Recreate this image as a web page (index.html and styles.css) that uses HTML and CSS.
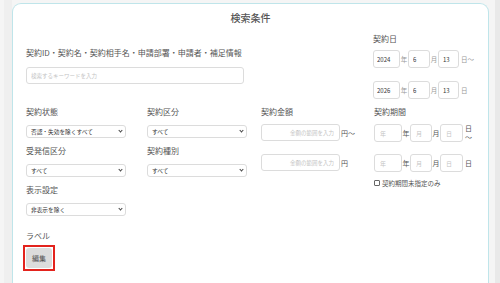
FILE: index.html
```html
<!DOCTYPE html>
<html lang="ja">
<head>
    <meta charset="UTF-8">
    <title>検索条件</title>
    <link rel="stylesheet" href="styles.css">
</head>
<body>
<div class="gutter-left"></div>
<div class="panel">
    <h2 class="title">検索条件</h2>

    <!--キーワードと契約日-->
    <div class="row-top">
        <div class="keyword">
            <label class="label" for="keyword">契約ID・契約名・契約相手名・申請部署・申請者・補足情報</label>
            <input class="text-input keyword-input" id="keyword" type="text" placeholder="検索するキーワードを入力">
        </div>
        <div class="date-col">
            <span class="label">契約日</span>
            <div class="date-row">
                <input class="date-input year" type="text" value="2024"><span class="unit light">年</span>
                <input class="date-input month" type="text" value="6"><span class="unit light">月</span>
                <input class="date-input day" type="text" value="13"><span class="unit light tail">日〜</span>
            </div>
            <div class="date-row second">
                <input class="date-input year" type="text" value="2026"><span class="unit light">年</span>
                <input class="date-input month" type="text" value="6"><span class="unit light">月</span>
                <input class="date-input day" type="text" value="13"><span class="unit light tail">日</span>
            </div>
        </div>
    </div>

    <!--プルダウン・金額・期間-->
    <div class="row-main">
        <div class="selects">
            <div class="field">
                <span class="label">契約状態</span>
                <span class="select-wrap">
                    <select class="select">
                        <option>否認・失効を除くすべて</option>
                    </select>
                </span>
            </div>
            <div class="field">
                <span class="label">契約区分</span>
                <span class="select-wrap">
                    <select class="select">
                        <option>すべて</option>
                    </select>
                </span>
            </div>
            <div class="field">
                <span class="label">受発信区分</span>
                <span class="select-wrap">
                    <select class="select">
                        <option>すべて</option>
                    </select>
                </span>
            </div>
            <div class="field">
                <span class="label">契約種別</span>
                <span class="select-wrap">
                    <select class="select">
                        <option>すべて</option>
                    </select>
                </span>
            </div>
            <div class="field">
                <span class="label">表示設定</span>
                <span class="select-wrap">
                    <select class="select">
                        <option>非表示を除く</option>
                    </select>
                </span>
            </div>
        </div>

        <div class="amount">
            <span class="label">契約金額</span>
            <div class="amount-row">
                <input class="text-input amount-input" type="text" placeholder="金額の範囲を入力"><span class="unit dark">円〜</span>
            </div>
            <div class="amount-row second">
                <input class="text-input amount-input" type="text" placeholder="金額の範囲を入力"><span class="unit dark">円</span>
            </div>
        </div>

        <div class="period">
            <span class="label">契約期間</span>
            <div class="date-row">
                <input class="date-input p-year" type="text" placeholder="年"><span class="unit dark">年</span>
                <input class="date-input p-month" type="text" placeholder="月"><span class="unit dark">月</span>
                <input class="date-input p-day" type="text" placeholder="日"><span class="unit dark tail stack">日<br>〜</span>
            </div>
            <div class="date-row p-second">
                <input class="date-input p-year" type="text" placeholder="年"><span class="unit dark">年</span>
                <input class="date-input p-month" type="text" placeholder="月"><span class="unit dark">月</span>
                <input class="date-input p-day" type="text" placeholder="日"><span class="unit dark tail">日</span>
            </div>
            <label class="check">
                <span class="check-box"></span>契約期間未指定のみ
            </label>
        </div>
    </div>

    <!--ラベル-->
    <div class="label-block">
        <span class="label">ラベル</span>
        <!--赤枠で囲まれた編集ボタン-->
        <span class="edit-frame">
            <button class="edit-button" type="button">編集</button>
        </span>
    </div>

    <div class="next-label">ソート条件</div>
</div>
<div class="gutter-right"></div>
</body>
</html>
```

FILE: styles.css
```css
* {
    margin: 0;
    padding: 0;
    box-sizing: border-box;
}

body {
    display: flex;
    align-items: flex-start;
    height: 283px;
    overflow: hidden;
    background: #f5f5f5;
    font-family: "Noto Sans CJK JP", "Noto Sans", sans-serif;
    color: #555;
}

.gutter-left {
    margin-left: 4px;
    width: 8px;
    height: 283px;
    background: #efefef;
}

.panel {
    margin-top: 3px;
    padding: 0 13px;
    width: 477px;
    height: 320px;
    background: #fff;
    border: 1px solid #bfe5ea;
    border-bottom: none;
    border-radius: 9px 9px 0 0;
}

.gutter-right {
    margin-left: 6px;
    width: 5px;
    height: 283px;
    background: #e9e9e9;
}

.title {
    margin-top: 7px;
    font-size: 10px;
    line-height: 14px;
    font-weight: 500;
    text-align: center;
    color: #555;
}

.label {
    display: block;
    font-size: 8px;
    line-height: 12px;
    color: #555;
    white-space: nowrap;
}

/* 入力欄の共通部分 */
.text-input,
.date-input,
.select {
    font: inherit;
    color: #333;
    background: #fff;
    border: 1px solid #dcdcdc;
    border-radius: 3px;
    outline: none;
}

.text-input::placeholder,
.date-input::placeholder {
    color: #c4c4c4;
}

.row-top {
    display: flex;
    margin-top: 8px;
}

.keyword {
    padding-top: 14px;
    width: 218px;
}

.keyword-input {
    display: block;
    margin-top: 8px;
    padding: 0 4px;
    width: 218px;
    height: 17px;
    font-size: 5.5px;
}

.date-col {
    margin-left: 129px;
}

.date-row {
    display: flex;
    align-items: center;
    margin-top: 5px;
    height: 18px;
}

.date-row.second {
    margin-top: 13px;
}

.date-input {
    height: 18px;
    padding-left: 4px;
    font-size: 6px;
}

.year {
    width: 27px;
    padding-left: 3px;
}

.month {
    width: 22px;
}

.day {
    width: 21px;
}

.unit {
    display: inline-block;
    width: 8px;
    text-align: center;
    font-size: 6.5px;
    line-height: 8px;
}

.unit.light {
    color: #999;
}

.unit.dark {
    color: #555;
    font-size: 7px;
}

.unit.tail {
    width: auto;
    padding-left: 2px;
}

.row-main {
    display: flex;
    margin-top: 7px;
}

.selects {
    display: grid;
    grid-template-columns: 100px 100px;
    column-gap: 21px;
    row-gap: 7px;
    width: 221px;
}

.select-wrap {
    position: relative;
    display: block;
    margin-top: 7px;
}

.select {
    display: block;
    width: 100px;
    height: 13px;
    padding-left: 4px;
    font-size: 5.7px;
    -webkit-appearance: none;
    appearance: none;
}

/*プルダウンの矢印*/
.select-wrap::after {
    content: "";
    position: absolute;
    right: 4px;
    top: 4px;
    width: 2px;
    height: 2px;
    border-right: 1px solid #444;
    border-bottom: 1px solid #444;
    transform: rotate(45deg);
}

.amount {
    margin-left: 14px;
    width: 98px;
}

.amount-row {
    display: flex;
    align-items: center;
    margin-top: 6px;
}

.amount-row.second {
    margin-top: 13px;
}

.amount-input {
    width: 79px;
    height: 17px;
    padding-right: 5px;
    text-align: right;
    font-size: 5.5px;
}

.amount-row .unit {
    width: auto;
    padding-left: 1px;
}

.period {
    margin-left: 15px;
}

.period .date-row {
    margin-top: 6px;
}

.period .date-row.p-second {
    margin-top: 12px;
}

.p-year {
    width: 28px;
    padding-left: 5px;
}

.p-month {
    width: 22px;
    padding-left: 5px;
}

.p-day {
    width: 23px;
    padding-left: 5px;
}

.stack {
    line-height: 9px;
}

.check {
    display: flex;
    align-items: center;
    margin-top: 7px;
    font-size: 6.5px;
    line-height: 8px;
    color: #555;
}

.check-box {
    display: inline-block;
    margin-right: 2px;
    width: 6px;
    height: 6px;
    border: 1px solid #666;
    border-radius: 1px;
}

.label-block {
    margin-top: 14px;
}

/*角のある赤枠*/
.edit-frame {
    display: inline-block;
    margin-left: -3px;
    padding: 1px;
    border: 2px solid #e3231d;
}

.edit-button {
    display: block;
    width: 26px;
    height: 20px;
    font: inherit;
    font-size: 7px;
    color: #555;
    background: #dcdcdc;
    border: none;
    border-radius: 3px;
}

.next-label {
    margin-top: 11px;
    padding-left: 4px;
    font-size: 8px;
    line-height: 12px;
}
```
